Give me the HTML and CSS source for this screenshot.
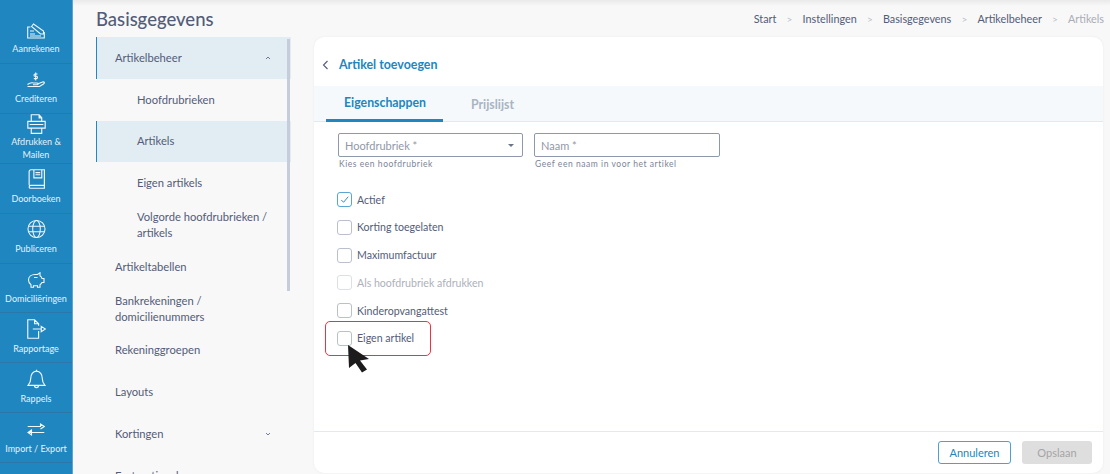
FILE: index.html
```html
<!DOCTYPE html>
<html lang="nl">
<head>
<meta charset="utf-8">
<title>Artikel toevoegen</title>
<link rel="stylesheet" href="styles.css">
</head>
<body>
<aside class="rail">
  <a class="rail-item rail-first"><svg class="ri" viewBox="0 0 18 16"><path d="M3.500 4H.7v11h16.600V9M4.500 3.500L6.500 1 16.500 8v3h-3zM3 8h4M3 11h5M3 13h11"/></svg><span>Aanrekenen</span></a>
  <a class="rail-item"><svg class="ri" viewBox="0 0 18 16"><path d="M.5 12.500c2-1.500 4-2 6-1.500h3.500c1.500 0 1.500 1.800 0 1.800H6M10.500 12l5-2c2-.5 2.500 1 1 2l-4 2.500H.5"/><path d="M10.500 2H8c-1.300 0-1.300 2.300 0 2.300h1.500c1.300 0 1.300 2.300 0 2.300H6.800M8.700 .4v8"/></svg><span>Crediteren</span></a>
  <a class="rail-item rail-two"><svg class="ri ri-big" viewBox="0 0 18 19"><path d="M4 7V.7h7.500L14 3.500V7M.7 7h16.600v6.500H.7zM4 13.500v5h10v-5M11.500 .7v3H14M2.500 10h13"/></svg><span>Afdrukken &amp;<br>Mailen</span></a>
  <a class="rail-item"><svg class="ri ri-big" viewBox="0 0 18 19"><path d="M2 15.500V2.500C2 1.500 2.700.7 3.700.7H16.500v14.800H3.500C2.500 15.500 2 16.200 2 17s.5 1.300 1.500 1.300h13v-2.800M6.500 .7v7.800h7.500V.7M8 3.500h4.500M8 5.500h4.500"/></svg><span>Doorboeken</span></a>
  <a class="rail-item"><svg class="ri ri-big" viewBox="0 0 20 20"><circle cx="10" cy="10" r="9"/><ellipse cx="10" cy="10" rx="4" ry="9"/><path d="M1.500 7h17M1.500 13h17"/></svg><span>Publiceren</span></a>
  <a class="rail-item"><svg class="ri" viewBox="0 0 18 16"><path d="M1.500 8c0-3.500 3-5.500 6.500-5.500h2.500L13 .8v3c1 .7 1.800 1.700 2 2.700h2v4h-2c-.5 1-1 1.500-2 2.200v2.500h-2.500v-1.500H6.500v1.500H4v-2.500C2.500 11.500 1.500 10 1.500 8zM7 5.500h3.500"/></svg><span>Domiciliëringen</span></a>
  <a class="rail-item"><svg class="ri ri-big" viewBox="0 0 18 19"><path d="M11 11.500v6.800H.7V.7h6.500L11 4.500v2M7.200 .7v3.800H11M5.500 9.500h7.500M13.500 7l4 2.500-4 2.500z"/></svg><span>Rapportage</span></a>
  <a class="rail-item"><svg class="ri ri-big" viewBox="0 0 18 19"><path d="M1 15.500c1.800-2 2.500-3 2.500-6.500S5.500 2 9 2s5.500 3.500 5.500 7 .7 4.500 2.500 6.500zM9 2V.7M7 15.500c0 3 4 3 4 0"/></svg><span>Rappels</span></a>
  <a class="rail-item"><svg class="ri" viewBox="0 0 18 14"><path d="M.7 3.500h12.800V1L17.300 3.500 13.500 6M17.300 9.500H1M4.500 7L1 9.500 4.500 12z"/></svg><span>Import / Export</span></a>
</aside>

<main class="page">
  <header class="topbar">
    <h1>Basisgegevens</h1>
    <nav class="crumbs">
      <span>Start</span><i>&gt;</i><span>Instellingen</span><i>&gt;</i><span>Basisgegevens</span><i>&gt;</i><span>Artikelbeheer</span><i>&gt;</i><span class="crumb-now">Artikels</span>
    </nav>
  </header>

  <div class="content">
    <nav class="menu">
      <div class="menu-scroll"></div>
      <a class="row on">Artikelbeheer<svg class="caret" viewBox="0 0 6 4"><path d="M1 3l2-2 2 2"/></svg></a>
      <a class="row sub">Hoofdrubrieken</a>
      <a class="row sub on">Artikels</a>
      <a class="row sub">Eigen artikels</a>
      <a class="row sub">Volgorde hoofdrubrieken / artikels</a>
      <a class="row">Artikeltabellen</a>
      <a class="row">Bankrekeningen / domicilienummers</a>
      <a class="row">Rekeninggroepen</a>
      <a class="row">Layouts</a>
      <a class="row">Kortingen<svg class="caret" viewBox="0 0 6 4"><path d="M1 1l2 2 2-2"/></svg></a>
      <a class="row">Facturatie adressen</a>
    </nav>

    <section class="card">
      <div class="card-head">
        <svg class="back" viewBox="0 0 7 10"><path d="M5.500 1L1.500 5l4 4"/></svg>
        <h2>Artikel toevoegen</h2>
      </div>
      <div class="tabs">
        <a class="tab active">Eigenschappen</a>
        <a class="tab">Prijslijst</a>
      </div>
      <form class="form">
        <div class="fields">
          <div class="field">
            <div class="input select">Hoofdrubriek *<b class="arrow"></b></div>
            <small>Kies een hoofdrubriek</small>
          </div>
          <div class="field">
            <div class="input">Naam *</div>
            <small>Geef een naam in voor het artikel</small>
          </div>
        </div>
        <div class="checks">
          <label class="check"><span class="box box-on"><svg viewBox="0 0 14 14"><path d="M3.500 7.500l2.500 2.500 5-6"/></svg></span>Actief</label>
          <label class="check"><span class="box"></span>Korting toegelaten</label>
          <label class="check"><span class="box"></span>Maximumfactuur</label>
          <label class="check dim"><span class="box"></span>Als hoofdrubriek afdrukken</label>
          <label class="check"><span class="box"></span>Kinderopvangattest</label>
          <label class="check"><span class="box"></span>Eigen artikel</label>
        </div>
        <div class="callout"></div>
        <svg class="cursor" viewBox="0 0 24 29"><path d="M1 1l21 14-9 1.500 7 9-5 3-6.500-9.500L2 24z"/></svg>
      </form>
      <footer class="card-foot">
        <button type="button" class="btn btn-line">Annuleren</button>
        <button type="button" class="btn btn-off">Opslaan</button>
      </footer>
    </section>
  </div>
</main>
</body>
</html>
```
FILE: styles.css
```css
* { box-sizing: border-box; }
html, body { margin: 0; height: 474px; overflow: hidden; }
body {
  display: flex;
  background: #f8f8f9;
  font-family: "Lato", "Noto Sans", sans-serif;
  color: #535c78;
  position: relative;
}
body::before {
  content: "";
  position: absolute;
  left: 0; right: 0; top: 0;
  height: 6px;
  background: linear-gradient(#e9e9ea, #f8f8f9);
}
.rail {
  width: 73px;
  flex: none;
  height: 474px;
  overflow: hidden;
  background: #2086bf;
  border-right: 1px solid #5aa5d2;
  position: relative;
  z-index: 1;
}
.rail-item {
  height: 49.900px;
  display: flex;
  flex-direction: column;
  align-items: center;
  justify-content: flex-end;
  padding-bottom: 7px;
  border-bottom: 1px solid #2a78a9;
  color: #e6f1f8;
  font-size: 9px;
  line-height: 13.500px;
  text-align: center;
  white-space: nowrap;
}
.rail-first { height: 64px; padding-bottom: 8px; }
.rail-two { padding-bottom: 1px; }
.ri { width: 18px; height: 16px; margin-bottom: 4px; fill: none; stroke: #f1f7fb; stroke-width: 1.100; }
.ri-big { width: 19px; height: 20px; margin-bottom: 3px; }
.rail-two .ri { margin-bottom: 1px; }
.rail-first .ri { margin-bottom: 3px; }

.page { flex: 1; min-width: 0; display: flex; flex-direction: column; padding: 0 5px 0 23px; }
.topbar { height: 37px; display: flex; align-items: center; justify-content: space-between; position: relative; }
h1 { margin: 0; font-size: 18.500px; font-weight: 500; color: #535c78; }
.crumbs { display: flex; align-items: center; font-size: 10.800px; color: #535c78; white-space: nowrap; margin-right: 1px; }
.crumbs i { font-style: normal; color: #b9bdc8; margin: 0 10.200px; font-size: 10px; }
.crumb-now { color: #a9adb6; }

.content { flex: 1; display: flex; gap: 23px; min-height: 0; }
.menu { width: 195px; flex: none; position: relative; }
.menu-scroll { position: absolute; right: 1px; top: 2px; width: 3px; height: 252px; background: #c6cdda; z-index: 1; }
.row {
  height: 41.800px;
  display: flex;
  align-items: center;
  justify-content: space-between;
  padding: 0 20px 0 18px;
  font-size: 11.200px;
  line-height: 16px;
  border-left: 1px solid transparent;
}
.row.sub { padding-left: 40px; padding-right: 20px; }
.row.on { background: #e1edf3; border-left-color: #2089c4; }
.caret { width: 6px; height: 4px; fill: none; stroke: #535c78; stroke-width: .8; }

.card {
  width: 789px;
  height: 436px;
  background: #fff;
  border-radius: 10px;
  box-shadow: 0 0 2px #e6e6e8;
  display: flex;
  flex-direction: column;
  overflow: hidden;
  position: relative;
}
.card-head { height: 49px; display: flex; align-items: center; padding: 6px 0 0 8px; gap: 10px; }
.back { width: 7px; height: 10px; fill: none; stroke: #535c78; stroke-width: 1.100; }
h2 { margin: 0; font-size: 12.400px; font-weight: 700; color: #2086bf; }
.tabs { height: 36px; display: flex; padding-left: 12px; background: #f5f9fc; border-bottom: 1px solid #dfeaf1; }
.tab { width: 117px; padding-left: 18px; margin-bottom: -1px; display: flex; align-items: center; font-size: 12.300px; font-weight: 700; color: #a9b4c2; }
.tab:first-child { color: #2086bf; border-bottom: 3px solid #2086bf; }
.tab + .tab { padding-left: 28px; }
.form { flex: 1; position: relative; padding: 11px 0 0 24px; }
.fields { display: flex; gap: 11px; }
.field { width: 185px; display: flex; flex-direction: column; }
.field + .field { width: 186px; }
.input { height: 24px; border: 1px solid #8f98ab; border-radius: 2px; padding-left: 6px; display: flex; align-items: center; justify-content: space-between; font-size: 11px; color: #9198a8; }
.arrow { width: 0; height: 0; border: 3px solid transparent; border-top: 3px solid #6c7488; border-bottom: 0; margin-right: 8px; }
small { font-size: 8.500px; color: #7d8496; padding: 2px 0 0 1px; letter-spacing: .55px; line-height: 11px; }
.checks { margin-top: 22px; margin-left: -1px; display: flex; flex-direction: column; gap: 12.800px; }
.check { height: 15px; display: flex; align-items: center; gap: 5px; font-size: 10.600px; color: #535c78; }
.box { width: 15px; height: 15px; flex: none; border: 1px solid #b9bfcd; border-radius: 3px; background: #fff; }
.box svg { display: block; width: 13px; height: 13px; fill: none; stroke: #2086bf; stroke-width: 1; }
.box-on { border-color: #5aa5d2; }
.dim { color: #adb1ba; }
.dim .box { border-color: #dcdfe5; }
.callout { position: absolute; left: 11px; top: 199px; width: 106px; height: 35px; border: 1px solid #f0323c; border-radius: 5px; }
.cursor { position: absolute; left: 33px; top: 222px; width: 24px; height: 29px; fill: #1c1c1c; }
.card-foot { height: 42px; border-top: 1px solid #dcecf3; display: flex; justify-content: flex-end; align-items: flex-start; gap: 11px; padding: 9px 11px 0 0; }
.btn { height: 23px; border-radius: 3px; font: 11px "Lato", "Noto Sans", sans-serif; padding: 0; }
.btn-line { width: 73px; background: #fff; border: 1px solid #4ea0d0; color: #2086bf; }
.btn-off { width: 70px; background: #dedede; border: 0; color: #a5a5a5; }
```
